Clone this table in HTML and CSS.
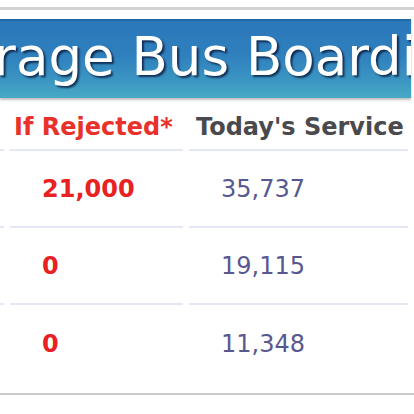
FILE: index.html
```html
<!DOCTYPE html>
<html>
<head>
<meta charset="utf-8">
<link rel="stylesheet" href="styles.css">
</head>
<body>
<div class="page">
  <div class="topline"></div>
  <div class="banner"><h1 class="title">Average Bus Boarding Summary</h1></div>
  <table class="stats">
    <colgroup><col class="c0"><col class="c1"><col class="c2"><col class="c3"></colgroup>
    <thead>
      <tr><th class="prev"></th><th class="rej">If Rejected*</th><th class="svc">Today's Service</th><th class="next"></th></tr>
    </thead>
    <tbody>
      <tr><td></td><td class="rejv">21,000</td><td class="svcv">35,737</td><td></td></tr>
      <tr><td></td><td class="rejv">0</td><td class="svcv">19,115</td><td></td></tr>
      <tr class="last"><td></td><td class="rejv">0</td><td class="svcv">11,348</td><td></td></tr>
    </tbody>
  </table>
  <div class="bottomline"></div>
</div>
</body>
</html>
```
FILE: styles.css
```css
html, body {
  margin: 0;
  padding: 0;
  background: #ffffff;
}
body {
  width: 414px;
  height: 414px;
  overflow: hidden;
  font-family: "DejaVu Sans", Verdana, sans-serif;
}
.page {
  padding-top: 7px;
}
.topline {
  height: 3px;
  background: #d2d2d2;
  margin-bottom: 9px;
}
.banner {
  height: 79px;
  margin-right: 3px;
  box-sizing: border-box;
  border-top: 2px solid #1f66a6;
  background: linear-gradient(to bottom, #2b77ba 0%, #2f80bd 45%, #3c98c2 80%, #48a9c6 100%);
  box-shadow: 0 2px 2px rgba(0, 0, 0, 0.25);
  overflow: hidden;
  display: flex;
}
.title {
  margin: 0 0 0 -103px;
  padding-top: 5px;
  font-size: 53px;
  font-weight: normal;
  color: #ffffff;
  white-space: nowrap;
  line-height: 1.164;
  text-shadow: 2px 2px 2px rgba(0, 10, 40, 0.7);
}
.stats {
  margin-left: -50px;
  margin-top: 2px;
  border-collapse: separate;
  border-spacing: 6px 0;
  table-layout: fixed;
  width: 525px;
}
.c0 { width: 48px; }
.c1 { width: 173px; }
.c2 { width: 219px; }
.c3 { width: 67px; }
.stats th,
.stats td {
  text-align: left;
  padding: 0;
  border-bottom: 2px solid #e4e8f5;
  white-space: nowrap;
}
.stats th {
  height: 51px;
  padding-top: 4px;
  box-sizing: border-box;
  font-size: 24px;
  font-weight: bold;
}
.stats td {
  height: 75px;
  font-size: 24px;
}
.stats tr.last td {
  border-bottom: none;
  height: 77px;
}
.rej {
  color: #e8312a;
  padding-left: 4px !important;
}
.svc {
  color: #4a4a4e;
  padding-left: 7px !important;
}
.rejv {
  color: #e82222;
  font-weight: bold;
  padding-left: 32px !important;
}
.svcv {
  color: #585890;
  padding-left: 32px !important;
}
.bottomline {
  margin-top: 11px;
  height: 2px;
  background: #cbcbcb;
}
```
